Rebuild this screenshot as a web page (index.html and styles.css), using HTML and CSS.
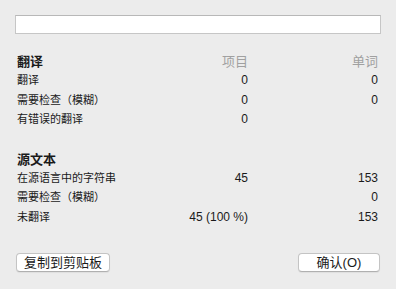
FILE: index.html
```html
<!DOCTYPE html>
<html lang="zh-CN">
<head>
    <meta charset="UTF-8">
    <title>统计</title>
    <link rel="stylesheet" href="styles.css">
</head>
<body>
    <div class="dialog">
        <div class="search-field"></div>

        <div class="stats">
            <div class="section-title">翻译</div>
            <div class="col-title">项目</div>
            <div class="col-title">单词</div>

            <div class="label">翻译</div>
            <div class="num">0</div>
            <div class="num">0</div>

            <div class="label">需要检查（模糊）</div>
            <div class="num">0</div>
            <div class="num">0</div>

            <div class="label">有错误的翻译</div>
            <div class="num">0</div>
            <div class="num"></div>
        </div>

        <div class="stats second">
            <div class="section-title">源文本</div>
            <div class="col-title"></div>
            <div class="col-title"></div>

            <div class="label">在源语言中的字符串</div>
            <div class="num">45</div>
            <div class="num">153</div>

            <div class="label">需要检查（模糊）</div>
            <div class="num"></div>
            <div class="num">0</div>

            <div class="label">未翻译</div>
            <div class="num">45 (100 %)</div>
            <div class="num">153</div>
        </div>

        <div class="button-row">
            <button class="btn copy-btn">复制到剪贴板</button>
            <button class="btn ok-btn">确认(O)</button>
        </div>
    </div>
</body>
</html>
```

FILE: styles.css
```css
* {
    margin: 0;
    padding: 0;
    box-sizing: border-box;
}

body {
    font-family: "Liberation Sans", "Noto Sans CJK SC", sans-serif;
    background: #ececec;
    color: #1a1a1a;
    width: 396px;
    height: 289px;
    overflow: hidden;
}

.dialog {
    padding: 15px 15px 0 15px;
}

.search-field {
    height: 19px;
    background: #fff;
    border: 1px solid #c6c6c6;
    border-top-color: #b8b8b8;
}

.stats {
    display: grid;
    grid-template-columns: 1fr 80px 130px;
    margin: 19px 3px 0 2px;
}

.stats.second {
    margin-top: 21px;
}

.section-title {
    font-size: 13px;
    font-weight: bold;
    line-height: 18px;
}

.col-title {
    font-size: 13px;
    color: #a0a0a0;
    text-align: right;
    line-height: 18px;
}

.label,
.num {
    font-size: 11px;
    line-height: 19.5px;
}

.num {
    font-size: 12px;
    text-align: right;
}

.button-row {
    display: flex;
    justify-content: space-between;
    margin: 26px 1px 0 1px;
}

.btn {
    font-family: "Liberation Sans", "Noto Sans CJK SC", sans-serif;
    font-size: 13px;
    color: #1a1a1a;
    height: 19px;
    line-height: 17px;
    background: #fff;
    border: 1px solid #c4c4c4;
    border-bottom-color: #b0b0b0;
    border-radius: 4px;
    box-shadow: 0 1px 1px rgba(0, 0, 0, 0.06);
}

.copy-btn {
    width: 94px;
}

.ok-btn {
    width: 82px;
}
```
